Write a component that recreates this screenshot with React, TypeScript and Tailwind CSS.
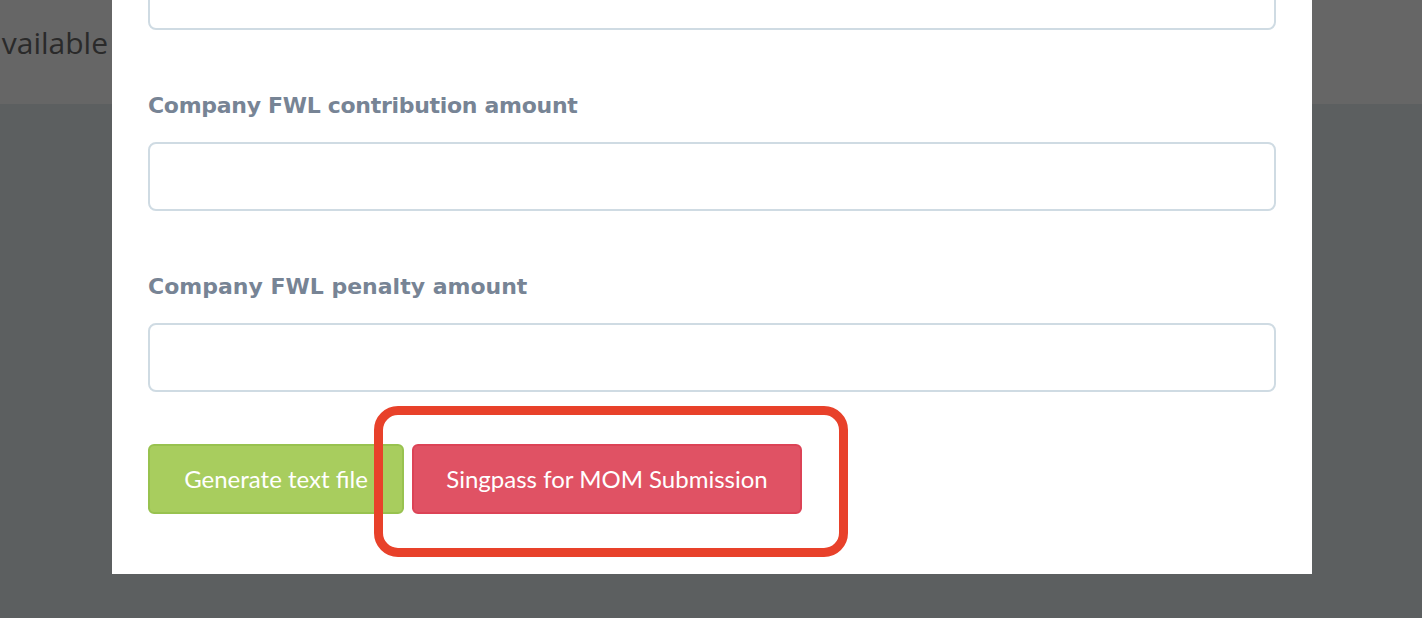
export default function App() {
  return (
    <div className="relative w-full h-[618px] overflow-hidden bg-[#5c5f60]">
      <div className="h-[104px] bg-[#666666] flex items-start">
        <div className="w-[112px] flex justify-end pt-[23px] pr-[4px]">
          <span
            className="whitespace-nowrap text-[30px] leading-[40px] text-[#2a2a2a]"
            style={{ fontFamily: '"Open Sans", "Noto Sans", sans-serif' }}
          >
            available
          </span>
        </div>
      </div>

      <div className="absolute left-[112px] top-0 w-[1200px] h-[574px] bg-white px-[36px]">
        <div className="mt-[-38px] h-[68px] rounded-[8px] border-2 border-[#cfdbe3]" />

        <div
          className="mt-[63px] h-[24px] flex items-center text-[22px] tracking-[-0.3px] font-bold text-[#778495]"
          style={{ fontFamily: '"DejaVu Sans", Verdana, sans-serif' }}
        >
          Company FWL contribution amount
        </div>
        <div className="mt-[25px] h-[69px] rounded-[8px] border-2 border-[#cfdbe3]" />

        <div
          className="mt-[63px] h-[24px] flex items-center text-[22px] tracking-[0px] font-bold text-[#778495]"
          style={{ fontFamily: '"DejaVu Sans", Verdana, sans-serif' }}
        >
          Company FWL penalty amount
        </div>
        <div className="mt-[25px] h-[69px] rounded-[8px] border-2 border-[#cfdbe3]" />

        <div
          className="mt-[52px] flex gap-[8px]"
          style={{ fontFamily: 'Lato, "Open Sans", sans-serif' }}
        >
          <button className="h-[70px] w-[256px] rounded-[6px] border-2 border-[#98c24f] bg-[#a8cd5e] text-white text-[24px]">
            Generate text file
          </button>
          <button className="h-[70px] w-[390px] rounded-[6px] border-2 border-[#dc4356] bg-[#e05264] text-white text-[24px]">
            Singpass for MOM Submission
          </button>
        </div>
      </div>

      <div className="absolute left-[374px] top-[406px] w-[474px] h-[151px] rounded-[24px] border-[9px] border-[#e8412a]" />
    </div>
  );
}
